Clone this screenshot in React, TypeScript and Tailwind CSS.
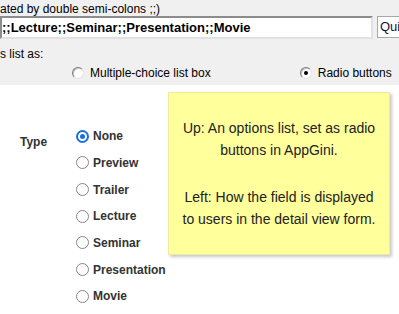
import React from "react";

const options = ["None", "Preview", "Trailer", "Lecture", "Seminar", "Presentation", "Movie"];

function ClassicRadio({ checked }: { checked?: boolean }) {
  return (
    <span className="flex h-[12px] w-[12px] items-center justify-center rounded-full border border-t-[#7a7a7a] border-l-[#7a7a7a] border-r-[#e4e4e4] border-b-[#e4e4e4] bg-white shadow-[inset_1px_1px_0_#c8c8c8]">
      {checked && <span className="h-[4px] w-[4px] rounded-full bg-black" />}
    </span>
  );
}

function ModernRadio({ checked }: { checked?: boolean }) {
  if (checked) {
    return (
      <span className="flex h-[13px] w-[13px] items-center justify-center rounded-full border-2 border-[#1a6fdf] bg-white">
        <span className="h-[5px] w-[5px] rounded-full bg-[#1a6fdf]" />
      </span>
    );
  }
  return <span className="h-[13px] w-[13px] rounded-full border-[1.5px] border-[#87848c] bg-white" />;
}

export default function App() {
  return (
    <div className="h-[314px] w-[399px] overflow-hidden bg-white font-['Liberation_Sans',Arial,sans-serif]">
      {/* Field settings (top, cut off) */}
      <div className="flex h-[85px] flex-col overflow-hidden bg-[#f0f0f0] text-[12px] text-black">
        <div className="whitespace-nowrap pt-[2px] leading-[14px]">ated by double semi-colons ;;)</div>

        <div className="flex gap-[4px]">
          <div className="flex h-[23px] w-[373px] shrink-0 items-center whitespace-nowrap border-2 border-t-[#8c8c8c] border-l-[#8c8c8c] border-r-[#e2e2e2] border-b-[#e2e2e2] bg-white text-[13px] font-bold leading-none">
            ;;Lecture;;Seminar;;Presentation;;Movie
          </div>
          <div className="flex h-[22px] w-[30px] shrink-0 items-center border border-[#a8a8a8] bg-white pl-[2px] text-[13px] text-[#101040]">
            Qui
          </div>
        </div>

        <div className="mt-[8px] leading-[14px]">s list as:</div>

        <div className="mt-[5px] flex h-[14px] items-center whitespace-nowrap leading-[14px]">
          <span className="ml-[72px]">
            <ClassicRadio />
          </span>
          <span className="ml-[6px]">Multiple-choice list box</span>
          <span className="ml-[89px]">
            <ClassicRadio checked />
          </span>
          <span className="ml-[6px]">Radio buttons</span>
        </div>
      </div>

      {/* Detail view preview + note */}
      <div className="flex">
        <div className="grid w-[168px] shrink-0 grid-cols-[76px_1fr] pt-[38px] text-[12px] font-bold text-[#333]">
          <div className="pl-[20px] pt-[12px] leading-[14px]">Type</div>
          <div className="flex flex-col">
            {options.map((o, i) => (
              <label key={o} className="flex h-[26.67px] items-center whitespace-nowrap">
                <ModernRadio checked={i === 0} />
                <span className="ml-[4px] leading-[14px]">{o}</span>
              </label>
            ))}
          </div>
        </div>

        <div className="mt-[7px] h-[163px] w-[222px] shrink-0 border border-[#ecec9c] bg-[#ffff9c] pt-[24px] text-center text-[14px] leading-[22px] text-[#222] shadow-[2px_2px_3px_rgba(0,0,0,0.22)]">
          <p>
            Up: An options list, set as radio
            <br />
            buttons in AppGini.
          </p>
          <p className="mt-[25px]">
            Left: How the field is displayed
            <br />
            to users in the detail view form.
          </p>
        </div>
      </div>
    </div>
  );
}
